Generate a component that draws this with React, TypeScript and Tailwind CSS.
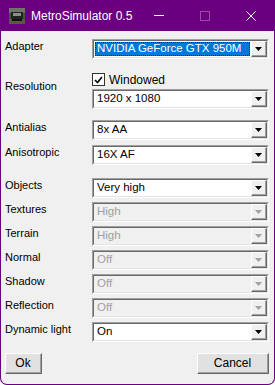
import React from "react";

const Arrow = ({ disabled }: { disabled?: boolean }) => (
  <svg width="7" height="4" viewBox="0 0 7 4">
    <polygon points="0,0 7,0 3.5,4" fill={disabled ? "#a0a0a0" : "#000"} />
  </svg>
);

function Combo({ value, disabled, selected }: { value: string; disabled?: boolean; selected?: boolean }) {
  return (
    <div className="flex h-[20px] flex-1 border border-t-[#a0a0a0] border-l-[#a0a0a0] border-r-white border-b-white text-[11.5px]">
      <div
        className={`flex flex-1 border border-t-[#696969] border-l-[#696969] border-r-[#e3e3e3] border-b-[#e3e3e3] ${
          disabled ? "bg-[#f0f0f0]" : "bg-white"
        }`}
      >
        <div className="flex-1 p-[1px]">
          {selected ? (
            <div className="flex h-full items-center border border-dotted border-[#3a2a00] bg-[#0078d7] pl-[1px] text-white">
              {value}
            </div>
          ) : (
            <div className={`flex h-full items-center pl-[2px] ${disabled ? "text-[#a0a0a0]" : "text-black"}`}>{value}</div>
          )}
        </div>
        {/* drop button */}
        <div className="flex w-[16px] border border-t-white border-l-white border-r-[#696969] border-b-[#696969] bg-[#f0f0f0]">
          <div className="flex flex-1 items-center justify-center border-r border-b border-r-[#a0a0a0] border-b-[#a0a0a0]">
            <Arrow disabled={disabled} />
          </div>
        </div>
      </div>
    </div>
  );
}

function Row({ label, value, disabled, selected }: { label: string; value: string; disabled?: boolean; selected?: boolean }) {
  return (
    <div className="flex">
      <div className="w-[87px] pt-[1px] leading-[13px]">{label}</div>
      <Combo value={value} disabled={disabled} selected={selected} />
    </div>
  );
}

function Btn({ children, className = "" }: { children: React.ReactNode; className?: string }) {
  return (
    <div className={`h-[21px] border border-t-white border-l-white border-r-[#696969] border-b-[#696969] bg-[#e1e1e1] ${className}`}>
      <div className="flex h-full items-center justify-center border-r border-b border-r-[#a0a0a0] border-b-[#a0a0a0]">
        {children}
      </div>
    </div>
  );
}

export default function App() {
  return (
    <div className="h-[385px] w-[275px] bg-white font-['Liberation_Sans',_Arial,_sans-serif]">
      <div className="flex h-full flex-col overflow-hidden rounded-b-[7px] border border-t-0 border-[#6a0080] bg-[#6a0080]">
        {/* Title bar */}
        <div className="flex h-[31px] items-center text-[12px] text-white">
          <svg width="16" height="16" viewBox="0 0 16 16" className="ml-[8px]">
            <rect width="16" height="16" fill="#4a5048" />
            <rect x="0" y="0" width="16" height="5" fill="#6d7468" />
            <rect x="2" y="4" width="12" height="7" fill="#1e2420" />
            <rect x="4" y="5" width="8" height="3" fill="#8a9088" />
            <rect x="0" y="11" width="16" height="5" fill="#5a5a40" />
            <rect x="3" y="11" width="10" height="2" fill="#101210" />
          </svg>
          <span className="ml-[6px]">MetroSimulator 0.5</span>
          <div className="ml-auto flex items-center">
            <div className="flex w-[46px] justify-center">
              <div className="h-[1px] w-[10px] bg-white" />
            </div>
            <div className="flex w-[46px] justify-center">
              <div className="h-[10px] w-[10px] border border-[#9a4aab]" />
            </div>
            <div className="flex w-[46px] justify-center">
              <svg width="10" height="10" viewBox="0 0 10 10">
                <path d="M0.5 0.5 L9.5 9.5 M9.5 0.5 L0.5 9.5" stroke="#fff" strokeWidth="1" />
              </svg>
            </div>
          </div>
        </div>

        {/* Client area */}
        <div className="flex flex-1 flex-col bg-[#f0f0f0] pt-[8px] pr-[5px] pl-[4px] text-[11px] text-black">
          <Row label="Adapter" value="NVIDIA GeForce GTX 950M" selected />

          <div className="mt-[14px] flex">
            <div className="w-[87px] pt-[7px] leading-[13px]">Resolution</div>
            <div className="flex flex-1 flex-col">
              <div className="flex h-[13px] items-center">
                <div className="flex h-[13px] w-[13px] items-center justify-center border border-[#333] bg-white">
                  <svg width="9" height="8" viewBox="0 0 9 8">
                    <path d="M1 4 L3.5 6.5 L8 1" stroke="#000" strokeWidth="1.6" fill="none" />
                  </svg>
                </div>
                <span className="ml-[4px] text-[12px]">Windowed</span>
              </div>
              <div className="mt-[3px] flex">
                <Combo value="1920 x 1080" />
              </div>
            </div>
          </div>

          <div className="mt-[11px] flex flex-col gap-[5px]">
            <Row label="Antialias" value="8x AA" />
            <Row label="Anisotropic" value="16X AF" />
          </div>

          <div className="mt-[13px] flex flex-col gap-[4px]">
            <Row label="Objects" value="Very high" />
            <Row label="Textures" value="High" disabled />
            <Row label="Terrain" value="High" disabled />
            <Row label="Normal" value="Off" disabled />
            <Row label="Shadow" value="Off" disabled />
            <Row label="Reflection" value="Off" disabled />
            <Row label="Dynamic light" value="On" />
          </div>

          <div className="mt-[11px] flex justify-between text-[12px]">
            <Btn className="w-[37px]">Ok</Btn>
            <Btn className="w-[72px]">Cancel</Btn>
          </div>
        </div>
      </div>
    </div>
  );
}
